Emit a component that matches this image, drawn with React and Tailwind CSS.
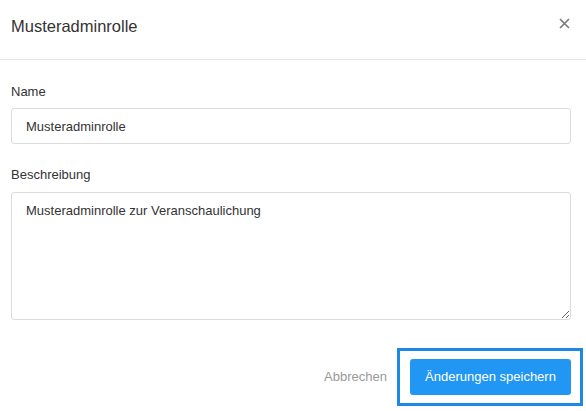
import React from "react";

const App = () => {
  return (
    <div
      className="w-[586px] h-[411px] bg-white text-[#333] flex flex-col overflow-hidden font-['Liberation_Sans',Arial,sans-serif]"
    >
      <div className="h-[60px] border-b border-[#e5e5e5] flex items-center justify-between pl-[11px] pr-[16px] shrink-0">
        <h4 className="text-[16.5px] leading-none text-[#333] -mt-[7px]">Musteradminrolle</h4>
        <button className="text-[#777] -mt-[12px]">
          <svg width="11" height="11" viewBox="0 0 11 11">
            <path d="M1 1L10 10M10 1L1 10" stroke="#7a7a7a" strokeWidth="1.6" />
          </svg>
        </button>
      </div>

      <div className="flex flex-col px-[11px] pr-[15px] pt-[23px]">
        <label className="text-[13px] leading-[18px] text-[#333]">Name</label>
        <input
          readOnly
          defaultValue="Musteradminrolle"
          className="mt-[7px] h-[36px] border border-[#dcdcdc] rounded-[3px] px-[14px] text-[13px] text-[#333] outline-none"
        />

        <label className="mt-[22px] text-[13px] leading-[18px] text-[#333]">Beschreibung</label>
        <textarea
          readOnly
          defaultValue="Musteradminrolle zur Veranschaulichung"
          className="mt-[8px] h-[128px] border border-[#dcdcdc] rounded-[3px] px-[14px] py-[10px] text-[13px] leading-[16px] text-[#333] outline-none resize-y"
        />
      </div>

      <div className="flex items-center justify-end pr-[3px] mt-[28px] gap-[10px]">
        <button className="text-[13px] text-[#999]">Abbrechen</button>
        <div className="border-[3px] border-[#1e88e5] pl-[10px] pr-[9px] py-[8px]">
          <button className="h-[36px] w-[161px] rounded-[3px] bg-[#2196f3] text-white text-[13px]">
            Änderungen speichern
          </button>
        </div>
      </div>
    </div>
  );
};

export default App;
